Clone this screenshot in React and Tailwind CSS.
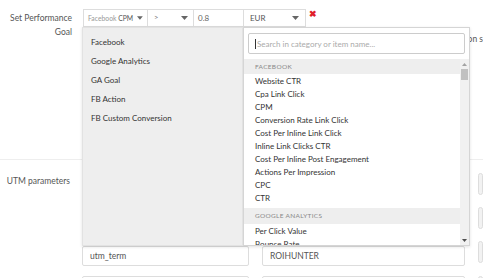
import React from "react";

const font = { fontFamily: "Lato, 'Open Sans', sans-serif" };

function Caret({ className = "" }) {
  return (
    <svg width="7" height="4" viewBox="0 0 7 4" className={className}>
      <path d="M0 0 L7 0 L3.5 4 Z" fill="#666" />
    </svg>
  );
}

const fbItems = [
  "Website CTR",
  "Cpa Link Click",
  "CPM",
  "Conversion Rate Link Click",
  "Cost Per Inline Link Click",
  "Inline Link Clicks CTR",
  "Cost Per Inline Post Engagement",
  "Actions Per Impression",
  "CPC",
  "CTR",
];
const gaItems = ["Per Click Value", "Bounce Rate"];
const cats = ["Facebook", "Google Analytics", "GA Goal", "FB Action", "FB Custom Conversion"];

export default function App() {
  return (
    <div className="relative w-[483px] h-[278px] overflow-hidden bg-white text-[#444]" style={font}>
      {/* Base form */}
      <div className="flex flex-col">
        {/* Performance goal row */}
        <div className="flex h-[159px] pt-[9px]">
          <div className="w-[72px] text-right text-[8.5px] leading-[14px] text-[#555] pt-[2px]">
            Set Performance
            <br />
            Goal
          </div>
          <div className="ml-[11px] flex h-[18px] items-start">
            <div className="flex h-[18px] w-[65px] items-center gap-[4px] whitespace-nowrap border border-[#ddd] pl-[4px] pr-[4px] text-[6.8px]">
              <span>
                <span className="text-[#999]">Facebook</span> <span className="text-[#555]">CPM</span>
              </span>
              <Caret />
            </div>
            <div className="flex h-[18px] w-[46px] items-center justify-between border border-l-0 border-[#ddd] pl-[6px] pr-[5px] text-[7.5px] text-[#777]">
              <span>&gt;</span>
              <Caret />
            </div>
            <div className="flex h-[18px] w-[50px] items-center border border-l-0 border-[#ddd] pl-[4px] text-[8px] text-[#666]">
              0.8
            </div>
            <div className="flex h-[18px] w-[62px] items-center justify-between border border-l-0 border-[#ddd] pl-[6px] pr-[6px] text-[8px] text-[#555]">
              <span>EUR</span>
              <Caret />
            </div>
            <span className="ml-[3px] -mt-[2px] text-[9px] font-bold leading-[14px] text-[#e0202a]">✖</span>
          </div>
          <div className="ml-auto mt-[24px] whitespace-nowrap text-[8.5px] text-[#555]">on s</div>
        </div>
        <div className="h-px bg-[#eee]" />
        {/* UTM */}
        <div className="flex pt-[13px]">
          <div className="w-[70px] text-right text-[8.5px] leading-[14px] text-[#555] pt-[1px]">UTM parameters</div>
          <div className="ml-[12px] flex flex-1 flex-col">
            <div className="grid grid-cols-[167px_203px_1fr] gap-x-[13px] gap-y-[12px]">
              <div className="h-[22px] rounded-[2px] border border-[#ddd]" />
              <div className="h-[22px] rounded-[2px] border border-[#ddd]" />
              <div className="h-[22px] rounded-[3px] border border-[#ddd] bg-[#f2f2f2]" />
              <div className="h-[22px] rounded-[2px] border border-[#ddd]" />
              <div className="h-[22px] rounded-[2px] border border-[#ddd]" />
              <div className="h-[22px] rounded-[3px] border border-[#ddd] bg-[#f2f2f2]" />
            </div>
            <div className="mt-[17px] grid grid-cols-[167px_203px_1fr] gap-x-[13px] gap-y-[10px]">
              <div className="flex h-[20px] items-center rounded-[2px] border border-[#ddd] pl-[7px] text-[8.5px] text-[#555]">
                utm_term
              </div>
              <div className="flex h-[20px] items-center rounded-[2px] border border-[#ddd] pl-[7px] text-[8.5px] text-[#555]">
                ROIHUNTER
              </div>
              <div className="-mt-[5px] h-[22px] rounded-[3px] border border-[#ddd] bg-[#f2f2f2]" />
              <div className="h-[20px] rounded-[2px] border border-[#ddd]" />
              <div className="h-[20px] rounded-[2px] border border-[#ddd]" />
              <div className="h-[20px] rounded-[3px] border border-[#ddd] bg-[#f2f2f2]" />
            </div>
          </div>
        </div>
      </div>

      {/* Dropdown overlay */}
      <div className="absolute left-[82px] top-[27px] flex h-[219px] w-[388px] shadow-[0_1px_3px_rgba(0,0,0,0.12)]">
        <div className="flex w-[161px] flex-col border border-[#e2e2e2] bg-[#eeeeee] pt-[4px] text-[8px] text-[#333]">
          {cats.map((c) => (
            <div key={c} className="flex h-[19px] items-center pl-[8px]">
              {c}
            </div>
          ))}
        </div>
        <div className="flex flex-1 flex-col border border-[#d5d5d5] bg-white">
          <div className="px-[4px] pt-[5px]">
            <div className="flex h-[21px] items-center rounded-[2px] border border-[#ccc] pl-[6px] text-[8px] text-[#aaa]">
              <span className="mr-[1px] h-[10px] w-px bg-[#333]" />
              Search in category or item name...
            </div>
          </div>
          <div className="mt-[5px] flex min-h-0 flex-1 overflow-hidden">
            <div className="flex-1 overflow-hidden">
              <div className="flex h-[15px] items-center bg-[#eeeeee] pl-[11px] text-[6.5px] tracking-[0.3px] text-[#888]">
                FACEBOOK
              </div>
              {fbItems.map((i) => (
                <div key={i} className="flex h-[13px] items-center pl-[11px] text-[8px] text-[#333]">
                  {i}
                </div>
              ))}
              <div className="mt-[4px] flex h-[16px] items-center bg-[#eeeeee] pl-[11px] text-[6.5px] tracking-[0.3px] text-[#888]">
                GOOGLE ANALYTICS
              </div>
              {gaItems.map((i) => (
                <div key={i} className="flex h-[13px] items-center pl-[11px] text-[8px] text-[#333]">
                  {i}
                </div>
              ))}
            </div>
            <div className="flex w-[9px] flex-col items-center bg-[#f1f1f1]">
              <svg width="5" height="3" viewBox="0 0 5 3" className="mt-[4px]">
                <path d="M0 3 L5 3 L2.5 0 Z" fill="#a3a3a3" />
              </svg>
              <div className="mt-[3px] h-[11px] w-[7px] bg-[#c1c1c1]" />
              <div className="flex-1" />
              <svg width="5" height="3" viewBox="0 0 5 3" className="mb-[3px]">
                <path d="M0 0 L5 0 L2.5 3 Z" fill="#505050" />
              </svg>
            </div>
          </div>
        </div>
      </div>
    </div>
  );
}
